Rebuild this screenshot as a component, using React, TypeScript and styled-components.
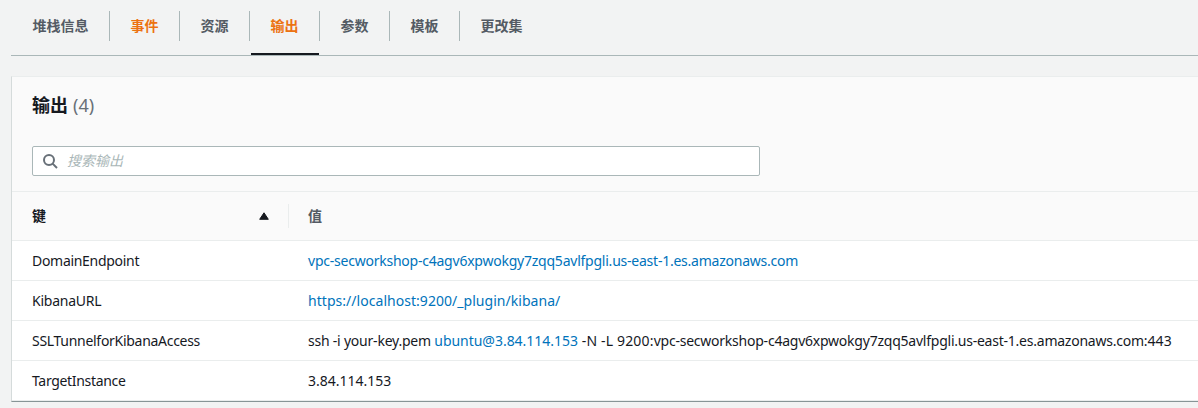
import React from 'react';
import styled, { createGlobalStyle } from 'styled-components';

const GlobalStyle = createGlobalStyle`
  * { box-sizing: border-box; }
  body {
    margin: 0;
    background: #f2f3f3;
    color: #16191f;
    font-family: "Noto Sans", "Noto Sans CJK SC", sans-serif;
    font-size: 14px;
    line-height: 20px;
  }
`;

const Page = styled.div`
  height: 408px;
  padding-left: 11px;
  overflow: hidden;
`;

const TabBar = styled.nav`
  display: flex;
  height: 56px;
  padding-left: 2px;
  border-bottom: 1px solid #aab7b8;
`;

const TabItem = styled.div`
  display: flex;
  align-items: flex-start;
  margin-right: 1px;
  &:not(:last-child)::after {
    content: "";
    width: 1px;
    height: 30px;
    margin-top: 11px;
    background: #aab7b8;
  }
`;

const TabLink = styled.a<{ $accent?: boolean; $active?: boolean }>`
  height: 55px;
  padding: 15px 20.5px 0 19.5px;
  font-family: "Noto Sans CJK SC", sans-serif;
  font-weight: 700;
  color: ${(p) => (p.$accent ? '#ec7211' : '#545b64')};
  border-bottom: 2px solid ${(p) => (p.$active ? '#16191f' : 'transparent')};
`;

const Card = styled.section`
  height: 326px;
  margin-top: 20px;
  border-top: 1px solid #eaeded;
  border-left: 1px solid #d5dbdb;
  border-bottom: 1px solid #879596;
  background: #fff;
`;

const CardHeader = styled.header`
  height: 115px;
  padding: 15px 20px 0;
  background: #fafafa;
  border-bottom: 1px solid #eaeded;
`;

const Title = styled.h2`
  display: flex;
  gap: 5px;
  margin: 0 0 28px;
  font-size: 18px;
  line-height: 26px;
  font-weight: 700;
`;

const Count = styled.span`
  font-weight: 400;
  color: #687078;
`;

const SearchBox = styled.label`
  display: flex;
  align-items: center;
  width: 728px;
  height: 30px;
  padding-left: 10px;
  gap: 9px;
  background: #fff;
  border: 1px solid #aab7b8;
  border-radius: 2px;
`;

const SearchInput = styled.input`
  flex: 1;
  height: 20px;
  margin-bottom: 2px;
  padding: 0;
  border: 0;
  outline: 0;
  background: none;
  font: 14px/20px "Noto Sans CJK SC", sans-serif;
  &::placeholder {
    color: #aab7b8;
    font-style: italic;
    opacity: 1;
  }
`;

const Row = styled.div<{ $head?: boolean }>`
  display: grid;
  grid-template-columns: 277px 1fr;
  align-items: center;
  height: ${(p) => (p.$head ? 49 : 40)}px;
  background: ${(p) => (p.$head ? '#fafafa' : '#fff')};
  border-bottom: 1px solid #eaeded;
`;

const HeadCell = styled.div<{ $sorted?: boolean }>`
  display: flex;
  align-items: center;
  justify-content: space-between;
  height: 24px;
  padding: ${(p) => (p.$sorted ? '0 19px 0 20px' : '0 19px')};
  font-weight: 700;
  color: ${(p) => (p.$sorted ? '#16191f' : '#545b64')};
  border-right: ${(p) => (p.$sorted ? '1px solid #eaeded' : '0')};
`;

const NameCell = styled.div<{ $track: number }>`
  padding-left: 20px;
  white-space: pre;
  letter-spacing: ${(p) => p.$track}px;
`;

const ValueCell = styled.div`
  padding-left: 19px;
  white-space: pre;
`;

const Text = styled.span<{ $track?: number; $link?: boolean }>`
  letter-spacing: ${(p) => p.$track ?? 0}px;
  color: ${(p) => (p.$link ? '#0073bb' : 'inherit')};
`;

const tabs = [
  { label: '堆栈信息' },
  { label: '事件', accent: true },
  { label: '资源' },
  { label: '输出', accent: true, active: true },
  { label: '参数' },
  { label: '模板' },
  { label: '更改集' },
];

const host = 'vpc-secworkshop-c4agv6xpwokgy7zqq5avlfpgli.us-east-1.es.amazonaws.com';

const outputs = [
  {
    name: 'DomainEndpoint',
    track: -0.3,
    value: [{ text: host, track: -0.232, link: true }],
  },
  {
    name: 'KibanaURL',
    track: -0.24,
    value: [{ text: 'https://localhost:9200/_plugin/kibana/', track: 0.04, link: true }],
  },
  {
    name: 'SSLTunnelforKibanaAccess',
    track: -0.29,
    value: [
      { text: 'ssh -i your-key.pem ', track: -0.22 },
      { text: 'ubuntu@3.84.114.153', track: -0.03, link: true },
      { text: ' -N -L 9200:', track: 0.17 },
      { text: host, track: -0.232 },
      { text: ':443' },
    ],
  },
  {
    name: 'TargetInstance',
    track: -0.32,
    value: [{ text: '3.84.114.153' }],
  },
];

export default function App() {
  return (
    <>
      <GlobalStyle />
      <Page>
        <TabBar>
          {tabs.map((t) => (
            <TabItem key={t.label}>
              <TabLink $accent={t.accent} $active={t.active}>{t.label}</TabLink>
            </TabItem>
          ))}
        </TabBar>
        <Card>
          <CardHeader>
            <Title>
              输出<Count>(4)</Count>
            </Title>
            <SearchBox>
              <svg width="15" height="16" viewBox="0 0 15 16" fill="none" stroke="#687078" strokeWidth="2">
                <circle cx="6" cy="7" r="5" />
                <path d="M9.6 10.6L14 15" />
              </svg>
              <SearchInput placeholder="搜索输出" />
            </SearchBox>
          </CardHeader>
          <Row $head>
            <HeadCell $sorted>
              键
              <svg width="10" height="8" viewBox="0 0 10 8">
                <path d="M5 0.8L9.3 7.3H0.7Z" fill="#16191f" stroke="#16191f" strokeLinejoin="round" />
              </svg>
            </HeadCell>
            <HeadCell>值</HeadCell>
          </Row>
          {outputs.map((o) => (
            <Row key={o.name}>
              <NameCell $track={o.track}>{o.name}</NameCell>
              <ValueCell>
                {o.value.map((v: { text: string; track?: number; link?: boolean }) => (
                  <Text key={v.text} as={v.link ? 'a' : 'span'} $track={v.track} $link={v.link}>
                    {v.text}
                  </Text>
                ))}
              </ValueCell>
            </Row>
          ))}
        </Card>
      </Page>
    </>
  );
}
